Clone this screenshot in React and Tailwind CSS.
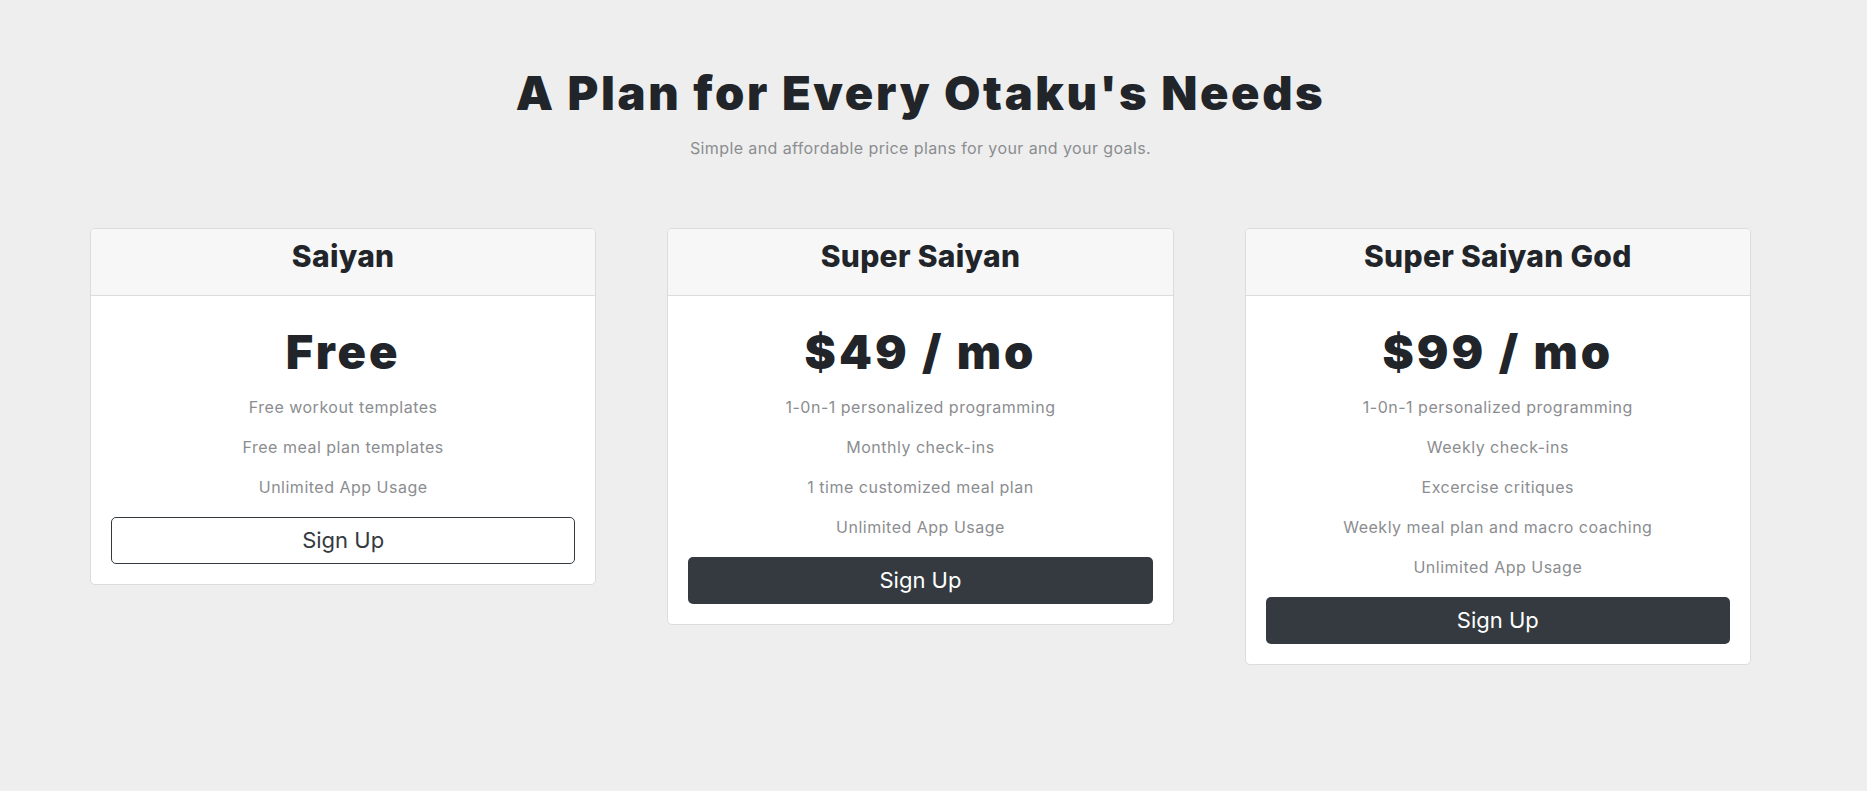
const plans = [
  {
    name: 'Saiyan',
    price: 'Free',
    features: ['Free workout templates', 'Free meal plan templates', 'Unlimited App Usage'],
    outline: true,
  },
  {
    name: 'Super Saiyan',
    price: '$49 / mo',
    features: ['1-0n-1 personalized programming', 'Monthly check-ins', '1 time customized meal plan', 'Unlimited App Usage'],
  },
  {
    name: 'Super Saiyan God',
    price: '$99 / mo',
    features: [
      '1-0n-1 personalized programming',
      'Weekly check-ins',
      'Excercise critiques',
      'Weekly meal plan and macro coaching',
      'Unlimited App Usage',
    ],
  },
];

function PlanCard({ plan }) {
  return (
    <div className="bg-white border border-[#dcdcdc] rounded-[5px] overflow-hidden">
      <div className="bg-[#f7f7f7] border-b border-[#dcdcdc] pt-[9px] pb-[21px] text-center">
        <h4 className="text-[30px] leading-[36px] font-extrabold text-[#212529] tracking-[0.3px]">{plan.name}</h4>
      </div>
      <div className="px-[20px] pt-[26px] pb-[20px] text-center">
        <h1 className="text-[47px] leading-[60px] font-black text-[#212529] tracking-[3px]">{plan.price}</h1>
        <ul className="mt-[5px] mb-[10px]">
          {plan.features.map(f => (
            <li key={f} className="text-[16px] leading-[40px] text-[#8b8d90] tracking-[0.5px]">{f}</li>
          ))}
        </ul>
        {plan.outline ? (
          <button className="w-full h-[47px] rounded-[5px] border border-[#343a40] text-[#343a40] text-[22px] bg-white">Sign Up</button>
        ) : (
          <button className="w-full h-[47px] rounded-[5px] bg-[#343a40] text-white text-[22px]">Sign Up</button>
        )}
      </div>
    </div>
  );
}

export default function App() {
  return (
    <div className="min-h-screen bg-[#eeeeee] font-['Inter',sans-serif]">
      <div className="w-[1661px] ml-[90px]">
        <div className="pt-[65px] text-center">
          <h1 className="text-[47px] leading-[56px] font-black text-[#212529] tracking-[2.6px]">A Plan for Every Otaku's Needs</h1>
          <p className="mt-[14px] text-[16px] leading-[26px] text-[#8b8d90] tracking-[0.4px]">Simple and affordable price plans for your and your goals.</p>
        </div>
        <div className="mt-[67px] grid grid-cols-3 gap-[71px] items-start">
          {plans.map(p => <PlanCard key={p.name} plan={p} />)}
        </div>
      </div>
    </div>
  );
}
